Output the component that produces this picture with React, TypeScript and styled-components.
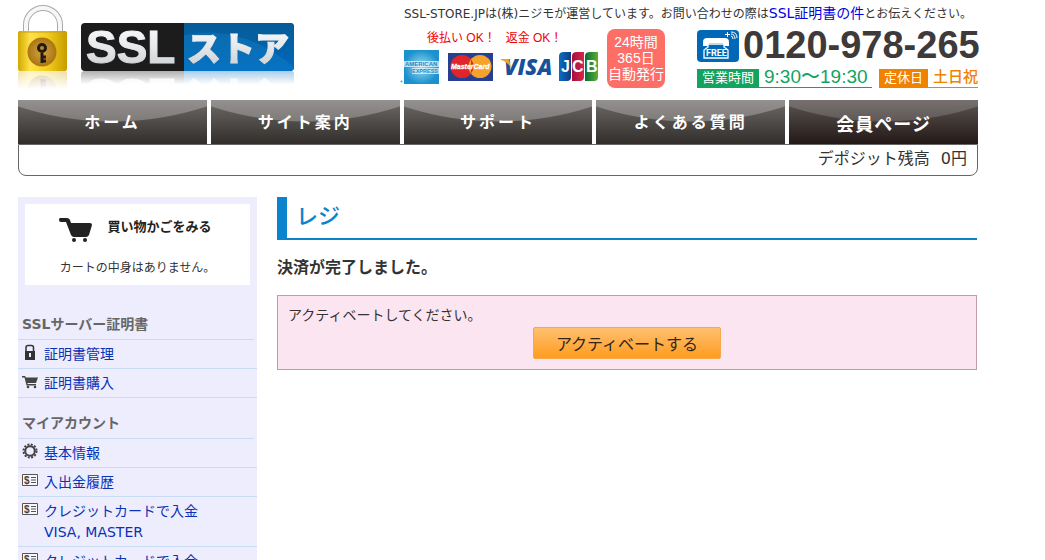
import React from "react";
import styled, { createGlobalStyle, css } from "styled-components";

const Global = createGlobalStyle`
  *, *::before, *::after { box-sizing: border-box; }
  html, body { margin: 0; padding: 0; background: #fff; }
  body {
    height: 100vh;
    overflow: hidden;
    color: #333;
    font: 14px/21px "DejaVu Sans", "Noto Sans CJK JP", sans-serif;
  }
  h1, h2, p, ul { margin: 0; padding: 0; }
  ul { list-style: none; }
  a { color: #0a32b4; text-decoration: none; }
  svg { display: block; flex: none; }
`;

const gothic = css`font-family: "Liberation Sans", "Noto Sans CJK JP", sans-serif;`;

const Page = styled.div`
  max-width: 960px;
  margin: 0 18px;
`;

const Header = styled.header`
  display: flex;
  justify-content: space-between;
  height: 100px;
`;

const LogoLink = styled.a`
  display: flex;
  gap: 13px;
  height: 71px;
  align-items: flex-end;
`;

const LogoArt = styled.svg`
  overflow: visible;
  -webkit-box-reflect: below 0 linear-gradient(transparent 72%, rgba(0, 0, 0, 0.35));
`;

const HeaderSide = styled.div`
  width: 578px;
  padding-top: 3px;
`;

const Notice = styled.p`
  font-size: 12px;
  line-height: 20px;
  padding-left: 4px;
  white-space: nowrap;
  a { font-size: 14px; color: #0000e0; }
`;

const Contact = styled.div`
  display: flex;
  align-items: flex-start;
  padding-top: 5px;
`;

const Payments = styled.div`
  width: 207px;
`;

const PayNotes = styled.p`
  display: flex;
  gap: 10px;
  padding-left: 27px;
  ${gothic}
  font-size: 12px;
  font-weight: 400;
  line-height: 18px;
  color: #f00000;
  white-space: nowrap;
`;

const Issue = styled.p`
  width: 58px;
  height: 59px;
  padding: 5px 0;
  border-radius: 8px;
  background: #fd6e67;
  color: #fff;
  text-align: center;
  ${gothic}
  font-size: 14px;
  font-weight: 400;
  line-height: 16px;
  white-space: nowrap;
`;

const Phone = styled.div`
  flex: 1;
  min-width: 0;
  margin-left: 32px;
`;

const NumberRow = styled.div`
  display: flex;
  gap: 4px;
  height: 34px;
  padding-top: 1px;
  white-space: nowrap;
`;

const PhoneNumber = styled.strong`
  ${gothic}
  font-size: 38px;
  line-height: 30px;
  color: #3e3a39;
`;

const Hours = styled.div`
  display: flex;
  justify-content: space-between;
  padding-top: 6px;
`;

const HoursItem = styled.p<{ $tone: string; $size: number }>`
  display: flex;
  height: 19px;
  padding-right: ${p => (p.$size > 16 ? 4 : 0)}px;
  border-bottom: 1px solid ${p => p.$tone};
  color: ${p => p.$tone};
  ${gothic}
  font-size: ${p => p.$size}px;
  font-weight: 500;
  line-height: 16px;
  white-space: nowrap;
  span {
    height: 19px;
    margin-right: 5px;
    padding: 0 5px;
    background: ${p => p.$tone};
    color: #fff;
    font-size: 13px;
    font-weight: 400;
    line-height: 18px;
  }
`;

const Nav = styled.nav`
  display: grid;
  grid-template-columns: repeat(5, 1fr);
  gap: 4px;
`;

const NavLink = styled.a<{ $current?: boolean }>`
  height: 44px;
  color: #fff;
  text-align: center;
  font-family: "Noto Sans CJK JP", sans-serif;
  font-weight: 700;
  font-size: ${p => (p.$current ? 18 : 16)}px;
  letter-spacing: ${p => (p.$current ? 1 : 3)}px;
  line-height: ${p => (p.$current ? 46 : 42)}px;
  background:
    radial-gradient(circle 302px at 50% -280px, rgba(255, 255, 255, ${p => (p.$current ? 0.16 : 0.26)}) 301px, transparent 302px),
    linear-gradient(${p => (p.$current ? "#5c5654, #231815" : "#6e6a68, #302d2a")});
`;

const Balance = styled.div`
  display: flex;
  justify-content: flex-end;
  gap: 11px;
  height: 32px;
  padding-right: 10px;
  border: 1px solid #666;
  border-radius: 0 0 8px 8px;
  font-size: 16px;
  line-height: 28px;
`;

const Columns = styled.div`
  display: grid;
  grid-template-columns: 239px 1fr;
  gap: 20px;
  margin-top: 21px;
  padding-right: 1px;
`;

const Sidebar = styled.aside`
  background: #ededfd;
`;

const Cart = styled.div`
  display: flex;
  flex-direction: column;
  align-items: center;
  gap: 16px;
  margin: 7px 7px 14px;
  height: 81px;
  padding-top: 12px;
  background: #fff;
  font-size: 12px;
`;

const CartLink = styled.a`
  display: flex;
  gap: 14px;
  margin-right: 4px;
  color: #222;
  font-size: 13px;
  font-weight: 700;
`;

const MenuHeading = styled.h2`
  margin-right: 3px;
  padding: 15px 0 4px 4px;
  border-bottom: 1px solid #c8dcf5;
  color: #666;
  font-size: 14px;
  line-height: 21px;
`;

const MenuItem = styled.li`
  border-bottom: 1px solid #c8dcf5;
  a {
    display: flex;
    gap: 6px;
    padding: 4px 4px 3px;
  }
  span { white-space: pre-line; }
`;

const Title = styled.h1`
  height: 43px;
  padding-left: 9px;
  border-left: 10px solid #0a84ce;
  box-shadow: inset 0 -2px #0a84c6;
  color: #0a84ce;
  font-size: 22px;
  font-weight: 500;
  line-height: 39px;
`;

const Lead = styled.p`
  padding: 17px 0;
  font-size: 16px;
  font-weight: 700;
`;

const Alert = styled.section`
  display: flex;
  flex-direction: column;
  padding: 9px 10px 10px;
  border: 1px solid #c59aac;
  background: #fbe5f1;
`;

const Activate = styled.button`
  align-self: center;
  width: 188px;
  height: 32px;
  margin-top: 1px;
  padding: 0;
  border: 1px solid #f5a94a;
  border-radius: 2px;
  background: linear-gradient(#ffc070, #ff9c20);
  color: #33261a;
  font: 16px/30px "Noto Sans CJK JP", sans-serif;
`;

const Logo = () => (
  <LogoLink href="#" aria-label="SSLストア">
    <LogoArt width="50" height="66" viewBox="0 0 50 66">
      <defs>
        <linearGradient id="gold"><stop stopColor="#d2a800" /><stop offset=".25" stopColor="#ffe24a" /><stop offset=".6" stopColor="#f1cd1c" /><stop offset="1" stopColor="#c99c00" /></linearGradient>
        <radialGradient id="disc"><stop stopColor="#d5a544" /><stop offset="1" stopColor="#a97512" /></radialGradient>
      </defs>
      <path d="M8 28V20a17 17 0 0 1 34 0v8" fill="none" stroke="#aaa" strokeWidth="6" />
      <path d="M8 28V20a17 17 0 0 1 34 0v8" fill="none" stroke="#f7f7f7" strokeWidth="4" />
      <rect y="26" width="49" height="40" rx="2" fill="url(#gold)" />
      <path d="M1 27h47" stroke="#c79d19" />
      <circle cx="24" cy="47" r="14.500" fill="url(#disc)" />
      <path d="M24 48v10M24 52h4M24 56h4" stroke="#231a10" strokeWidth="3" fill="none" />
      <circle cx="24" cy="43" r="3.500" fill="#b98a30" stroke="#231a10" strokeWidth="3" />
    </LogoArt>
    <LogoArt width="213" height="48" viewBox="0 0 213 48">
      <defs>
        <linearGradient id="steel" x2="0" y2="1"><stop stopColor="#fff" /><stop offset=".5" stopColor="#e6e8ea" /><stop offset="1" stopColor="#c9cdd0" /></linearGradient>
        <linearGradient id="blue" x2="0" y2="1"><stop stopColor="#075c96" /><stop offset="1" stopColor="#0068bd" /></linearGradient>
        <clipPath id="plate"><rect width="213" height="48" rx="4" /></clipPath>
      </defs>
      <g clipPath="url(#plate)">
        <rect width="213" height="48" fill="#1d1c1d" />
        <rect x="103" width="110" height="48" fill="url(#blue)" />
        <path d="M103 12Q160 0 213 44V48H103z" fill="#1588cf" opacity=".35" />
      </g>
      <text x="5" y="40" fontFamily="Liberation Sans" fontWeight="700" fontSize="46" fill="url(#steel)" stroke="url(#steel)">SSL</text>
      <text x="106" y="38" fontFamily="Noto Sans CJK JP" fontWeight="900" fontSize="34" fill="url(#steel)" stroke="url(#steel)">ストア</text>
    </LogoArt>
  </LogoLink>
);

const Cards = () => (
  <svg width="200" height="37" viewBox="0 0 200 37" role="img" aria-label="American Express, MasterCard, Visa, JCB">
    <defs>
      <radialGradient id="amex"><stop stopColor="#9fdcf5" /><stop offset="1" stopColor="#1b92cd" /></radialGradient>
      <linearGradient id="jb"><stop stopColor="#0a6fc0" /><stop offset="1" stopColor="#123a86" /></linearGradient>
      <linearGradient id="jr"><stop stopColor="#a4103c" /><stop offset="1" stopColor="#d8254c" /></linearGradient>
      <linearGradient id="jg"><stop stopColor="#0b6b37" /><stop offset="1" stopColor="#5bb030" /></linearGradient>
    </defs>
    <rect x="4" y="3" width="35" height="34" fill="url(#amex)" />
    <path d="M4 14h35v6H4zM12 21h27v6H12z" fill="#e9f7fd" opacity=".75" />
    <g fontFamily="Liberation Sans" fontWeight="700" fontSize="6" fill="#1f86bf">
      <text x="5" y="19">AMERICAN</text>
      <text x="12" y="26" fontSize="5.500">EXPRESS</text>
    </g>
    <circle cx="1.500" cy="34.500" r="1" fill="#4aa5d5" />
    <rect x="48" y="6" width="45" height="28" fill="#26408f" />
    <circle cx="62" cy="19.500" r="11.500" fill="#e0262c" />
    <circle cx="80" cy="19.500" r="11.500" fill="#f6a32b" />
    <path d="M71 12.300a11.500 11.500 0 0 1 0 14.400" fill="#e0262c" />
    <text x="51" y="22" fontFamily="Liberation Sans" fontWeight="700" fontStyle="italic" fontSize="7" fill="#fff" stroke="#fff" strokeWidth=".3">MasterCard</text>
    <text x="104" y="28" fontFamily="Open Sans" fontWeight="800" fontStyle="italic" fontSize="22" fill="#17509b">VISA</text>
    <path d="M101 12h8l2 9q-3-6-10-8z" fill="#f2a22c" />
    <path d="M164 5h7v25q0 4-4 4h-8V9q0-4 5-4z" fill="url(#jb)" />
    <path d="M177 5h7v25q0 4-4 4h-8V9q0-4 5-4z" fill="url(#jr)" />
    <path d="M190 5h8v25q0 4-4 4h-9V9q0-4 5-4z" fill="url(#jg)" />
    <g fontFamily="Liberation Sans" fontWeight="700" fontSize="16" fill="#fff">
      <text x="161" y="25">J</text><text x="172" y="25">C</text><text x="186" y="25">B</text>
    </g>
  </svg>
);

const FreeDial = () => (
  <svg width="42" height="32" viewBox="0 0 42 32">
    <rect width="42" height="32" rx="4" fill="#0068b7" />
    <path d="M6 16v-4q0-4 4-4h18q4 0 4 4v4h-6v-3H12v3z" fill="#fff" />
    <path d="M11 14h16v3l4 3v8H7v-8l4-3z" fill="#0068b7" stroke="#fff" strokeWidth="1.300" />
    <text x="9" y="26" fontFamily="Roboto" fontWeight="700" fontSize="9" fill="#fff">FREE</text>
    <path d="M30.500 2v5M28 4.500h5M34 6q2 0 2 3M34 4q4 0 4 5M34 2q6 0 6 6" stroke="#fff" fill="none" />
  </svg>
);

const cartPath = (
  <>
    <path d="M1 0h7q2 0 3 2l1 3h19q2 0 2 2l-3 10q-1 2-3 2H15q-2 0-3-2L7 4H2Q0 4 0 2 0 0 1 0z" />
    <circle cx="15" cy="22" r="2" /><circle cx="26" cy="22" r="2" />
  </>
);

const icons: Record<string, React.ReactNode> = {
  lock: (
    <svg width="16" height="17" viewBox="0 0 16 17">
      <path d="M4 8V3.500Q4 1.500 6 1.500h3.500q2 0 2 2V8" fill="none" stroke="#333" strokeWidth="1.500" />
      <path d="M3 7h10v9H3z" fill="#333" /><path d="M7 9h2v4H7z" fill="#ededfd" />
    </svg>
  ),
  cart: (
    <svg width="16" height="17" viewBox="0 0 16 17">
      <path d="M0 3h3l1 1.500h12L14 10H5.500v1H14v1.500H4.500L2.500 4.500H0z" fill="#444" />
      <circle cx="6" cy="14" r="1.300" fill="#444" /><circle cx="13" cy="14" r="1.300" fill="#444" />
    </svg>
  ),
  gear: (
    <svg width="16" height="17" viewBox="0 0 16 17">
      <circle cx="8" cy="8" r="6.500" fill="none" stroke="#444" strokeWidth="2" strokeDasharray="2 1.400" />
      <circle cx="8" cy="8" r="4.800" fill="none" stroke="#444" strokeWidth="2" />
    </svg>
  ),
  bill: (
    <svg width="16" height="17" viewBox="0 0 16 17">
      <path d="M.5 2.500h15v11H.5z" fill="#f7f7fc" stroke="#555" />
      <path d="M9 5.500h5M9 8h5M9 10.500h5" stroke="#555" />
      <text x="2" y="12" fontFamily="Liberation Sans" fontWeight="700" fontSize="10" fill="#444">$</text>
    </svg>
  ),
};

const menus = [
  { title: "SSLサーバー証明書", items: [["lock", "証明書管理"], ["cart", "証明書購入"]] },
  {
    title: "マイアカウント",
    items: [["gear", "基本情報"], ["bill", "入出金履歴"], ["bill", "クレジットカードで入金\nVISA, MASTER"], ["bill", "クレジットカードで入金"]],
  },
];

export default function App() {
  return (
    <>
      <Global />
      <Page>
        <Header>
          <Logo />
          <HeaderSide>
            <Notice>SSL-STORE.JPは(株)ニジモが運営しています。お問い合わせの際は<a href="#">SSL証明書の件</a>とお伝えください。</Notice>
            <Contact>
              <Payments>
                <PayNotes><span>後払い OK！</span><span>返金 OK！</span></PayNotes>
                <Cards />
              </Payments>
              <Issue>24時間<br />365日<br />自動発行</Issue>
              <Phone>
                <NumberRow><FreeDial /><PhoneNumber>0120-978-265</PhoneNumber></NumberRow>
                <Hours>
                  <HoursItem $tone="#13a35f" $size={19}><span>営業時間</span>9:30～19:30</HoursItem>
                  <HoursItem $tone="#f08200" $size={15}><span>定休日</span>土日祝</HoursItem>
                </Hours>
              </Phone>
            </Contact>
          </HeaderSide>
        </Header>
        <Nav>
          <NavLink href="#">ホーム</NavLink>
          <NavLink href="#">サイト案内</NavLink>
          <NavLink href="#">サポート</NavLink>
          <NavLink href="#">よくある質問</NavLink>
          <NavLink href="#" $current>会員ページ</NavLink>
        </Nav>
        <Balance><span>デポジット残高</span><span>0円</span></Balance>
        <Columns>
          <Sidebar>
            <Cart>
              <CartLink href="#">
                <svg width="34" height="26" viewBox="0 -2 34 26" fill="#222">{cartPath}</svg>
                買い物かごをみる
              </CartLink>
              <p>カートの中身はありません。</p>
            </Cart>
            {menus.map(menu => (
              <nav key={menu.title}>
                <MenuHeading>{menu.title}</MenuHeading>
                <ul>
                  {menu.items.map(([icon, label]) => (
                    <MenuItem key={label}><a href="#">{icons[icon]}<span>{label}</span></a></MenuItem>
                  ))}
                </ul>
              </nav>
            ))}
          </Sidebar>
          <main>
            <Title>レジ</Title>
            <Lead>決済が完了しました。</Lead>
            <Alert>
              <p>アクティベートしてください。</p>
              <Activate type="button">アクティベートする</Activate>
            </Alert>
          </main>
        </Columns>
      </Page>
    </>
  );
}
